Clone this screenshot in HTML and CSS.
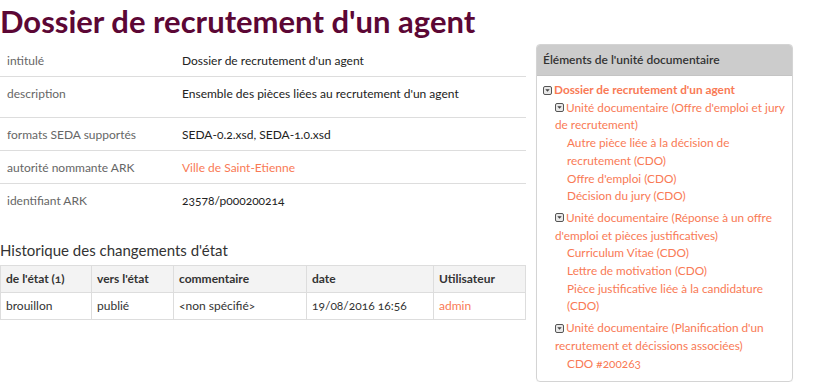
FILE: index.html
```html
<!DOCTYPE html>
<html lang="fr">
<head>
<meta charset="utf-8">
<title>Dossier de recrutement d'un agent</title>
<link rel="stylesheet" href="styles.css">
</head>
<body>
<h1 class="page-title">Dossier de recrutement d'un agent</h1>
<div class="layout">
  <div class="main">
    <table class="props">
      <tr><td class="label">intitulé</td><td class="value">Dossier de recrutement d'un agent</td></tr>
      <tr class="tall"><td class="label">description</td><td class="value">Ensemble des pièces liées au recrutement d'un agent</td></tr>
      <tr><td class="label">formats SEDA supportés</td><td class="value">SEDA-0.2.xsd, SEDA-1.0.xsd</td></tr>
      <tr><td class="label">autorité nommante ARK</td><td class="value"><a href="#">Ville de Saint-Etienne</a></td></tr>
      <tr><td class="label">identifiant ARK</td><td class="value">23578/p000200214</td></tr>
    </table>
    <h2 class="section-title">Historique des changements d'état</h2>
    <table class="history">
      <thead>
        <tr><th class="c1">de l'état (1)</th><th class="c2">vers l'état</th><th class="c3">commentaire</th><th class="c4">date</th><th class="c5">Utilisateur</th></tr>
      </thead>
      <tbody>
        <tr><td>brouillon</td><td>publié</td><td>&lt;non spécifié&gt;</td><td>19/08/2016 16:56</td><td><a href="#">admin</a></td></tr>
      </tbody>
    </table>
  </div>
  <aside class="panel">
    <div class="panel-head">Éléments de l'unité documentaire</div>
    <div class="panel-body">
      <div class="node root"><svg class="tog" viewBox="0 0 9 9"><rect x="0.5" y="0.5" width="8" height="8" rx="1.5" fill="#e8e8e8" stroke="#555"/><path d="M2.3 3.3h4.4L4.5 5.8z" fill="#444"/></svg><a href="#" class="strong">Dossier de recrutement d'un agent</a></div>
      <div class="group">
        <div class="node"><svg class="tog" viewBox="0 0 9 9"><rect x="0.5" y="0.5" width="8" height="8" rx="1.5" fill="#e8e8e8" stroke="#555"/><path d="M2.3 3.3h4.4L4.5 5.8z" fill="#444"/></svg><a href="#">Unité documentaire (Offre d'emploi et jury de recrutement)</a></div>
        <ul class="leaves">
          <li><a href="#">Autre pièce liée à la décision de recrutement (CDO)</a></li>
          <li><a href="#">Offre d'emploi (CDO)</a></li>
          <li><a href="#">Décision du jury (CDO)</a></li>
        </ul>
      </div>
      <div class="group">
        <div class="node"><svg class="tog" viewBox="0 0 9 9"><rect x="0.5" y="0.5" width="8" height="8" rx="1.5" fill="#e8e8e8" stroke="#555"/><path d="M2.3 3.3h4.4L4.5 5.8z" fill="#444"/></svg><a href="#">Unité documentaire (Réponse à un offre d'emploi et pièces justificatives)</a></div>
        <ul class="leaves">
          <li><a href="#">Curriculum Vitae (CDO)</a></li>
          <li><a href="#">Lettre de motivation (CDO)</a></li>
          <li><a href="#">Pièce justificative liée à la candidature (CDO)</a></li>
        </ul>
      </div>
      <div class="group">
        <div class="node"><svg class="tog" viewBox="0 0 9 9"><rect x="0.5" y="0.5" width="8" height="8" rx="1.5" fill="#e8e8e8" stroke="#555"/><path d="M2.3 3.3h4.4L4.5 5.8z" fill="#444"/></svg><a href="#">Unité documentaire (Planification d'un recrutement et décissions associées)</a></div>
        <ul class="leaves">
          <li><a href="#">CDO #200263</a></li>
        </ul>
      </div>
    </div>
  </aside>
</div>
</body>
</html>
```
FILE: styles.css
```css
html, body {
  margin: 0;
  padding: 0;
  background: #fff;
}
body {
  font-family: Lato, "Open Sans", "Liberation Sans", sans-serif;
  font-size: 12px;
  color: #333;
  font-variant-numeric: oldstyle-nums;
}
a {
  color: #f97a55;
  text-decoration: none;
}
.page-title {
  margin: 0;
  padding: 2px 0 0 0;
  font-size: 31px;
  line-height: 38px;
  font-weight: 700;
  color: #5c0735;
}
.layout {
  display: flex;
  align-items: flex-start;
  gap: 10px;
  margin-top: 4px;
}
.main {
  width: 526px;
}
.props {
  width: 100%;
  border-collapse: collapse;
}
.props td {
  padding: 8px 7px 6px 7px;
  line-height: 18px;
  vertical-align: top;
  border-bottom: 1px solid #ddd;
}
.props tr:last-child td {
  border-bottom: none;
}
.props .tall td {
  padding-bottom: 14px;
}
.props .label {
  width: 161px;
  color: #666;
}
.props .value {
  color: #222;
}
.section-title {
  margin: 25px 0 6px 0;
  font-size: 15px;
  line-height: 18px;
  font-weight: 400;
  color: #333;
}
.history {
  width: 100%;
  border-collapse: collapse;
}
.history th, .history td {
  border: 1px solid #ddd;
  text-align: left;
  padding: 4px 5px;
  line-height: 18px;
}
.history th {
  background: #f3f3f3;
  font-weight: 700;
  color: #333;
}
.history td {
  color: #333;
}
.history .c1 { width: 80px; }
.history .c2 { width: 71px; }
.history .c3 { width: 122px; }
.history .c4 { width: 116px; }
.panel {
  width: 255px;
  border: 1px solid #d4d4d4;
  border-radius: 4px;
  overflow: hidden;
  box-shadow: 0 1px 1px rgba(0,0,0,0.04);
}
.panel-head {
  background: #cccccc;
  padding: 6px 6px;
  line-height: 18px;
  font-weight: 600;
  color: #333;
  border-bottom: 1px solid #c4c4c4;
}
.panel-body {
  padding: 5px 2px 9px 6px;
  font-size: 11.8px;
  line-height: 17.7px;
}
.tog {
  width: 9px;
  height: 9px;
  margin-right: 2px;
  vertical-align: -0.5px;
}
.strong {
  font-weight: 700;
}
.group {
  padding-left: 12px;
}
.group + .group {
  margin-top: 4px;
}
.leaves {
  list-style: none;
  margin: 0;
  padding: 0 0 0 12px;
}
```
